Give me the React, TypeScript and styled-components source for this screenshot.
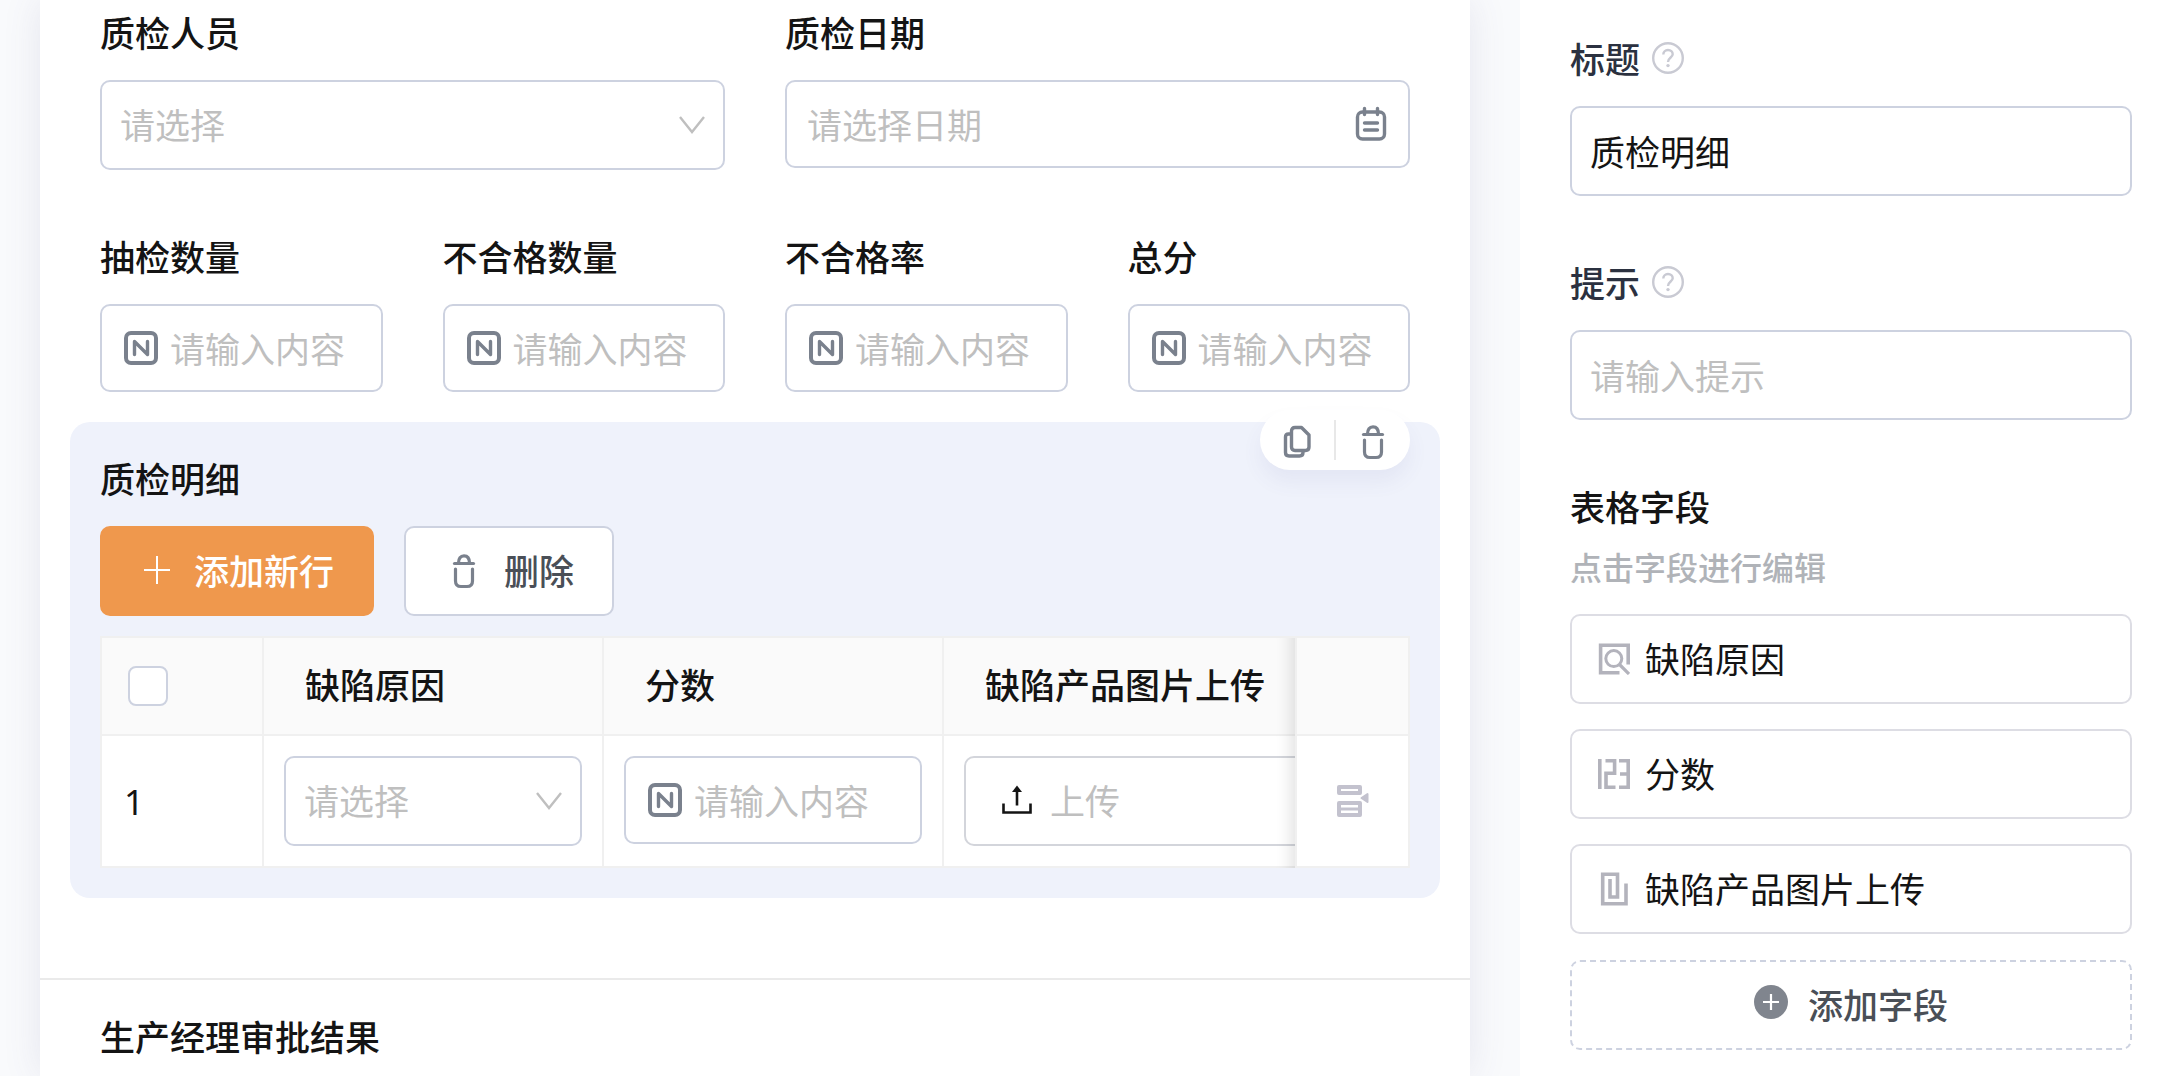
import React, { useId, useState } from "react";
import styled, { createGlobalStyle, css } from "styled-components";

const GlobalStyle = createGlobalStyle`
  *, *::before, *::after { box-sizing: border-box; }
  body {
    margin: 0;
    background: #f9fafc;
    color: #141414;
    font-family: "Noto Sans CJK SC", sans-serif;
    font-size: 35px;
    line-height: 44px;
  }
  button, input, select { font: inherit; color: inherit; margin: 0; }
  svg { display: block; flex: none; }
`;

const Page = styled.div`
  display: grid;
  grid-template-columns: minmax(0, 1fr) 642px;
  min-height: 100vh;
`;

const Canvas = styled.main`
  display: flex;
  padding: 0 50px 0 40px;
`;

const Sheet = styled.div`
  flex: 1;
  min-width: 0;
  background: #fff;
  box-shadow: 0 0 36px rgba(80, 80, 140, 0.12);
`;

const FormBody = styled.div`
  padding: 10px 30px 80px;
`;

const FieldRow = styled.div<{ $columns: number }>`
  display: grid;
  grid-template-columns: repeat(${(p) => p.$columns}, minmax(0, 1fr));
  align-items: start;
  column-gap: 60px;
  padding: 0 30px;
  margin-bottom: 64px;

  & + & { margin-bottom: 30px; }
`;

const FieldBox = styled.div`
  display: flex;
  flex-direction: column;
  gap: 26px;
`;

const LabelLine = styled.div`
  display: flex;
  align-items: center;
  gap: 12px;
`;

const Label = styled.label<{ $tone?: string }>`
  font-weight: 500;
  color: ${(p) => p.$tone ?? "#141414"};
`;

const Heading = styled.h2`
  margin: 0;
  font-size: 35px;
  line-height: 44px;
  font-weight: 500;
`;

const frame = css`
  border: 2px solid #cdd2e0;
  border-radius: 10px;
  background: #fff;
`;

const SelectFrame = styled.div`
  display: grid;
  align-items: center;

  & > * { grid-area: 1 / 1; }
  & > svg {
    justify-self: end;
    margin-right: 20px;
    pointer-events: none;
  }
`;

const NativeSelect = styled.select`
  ${frame}
  appearance: none;
  width: 100%;
  height: 90px;
  padding: 0 60px 2px 18px;
  color: #bfbfbf;
`;

const InputFrame = styled.div<{ $tall?: boolean; $inset?: number }>`
  ${frame}
  display: flex;
  align-items: center;
  gap: 12px;
  height: ${(p) => (p.$tall ? 90 : 88)}px;
  padding: 0 ${(p) => p.$inset ?? 18}px;
`;

const TextInput = styled.input`
  flex: 1;
  min-width: 0;
  height: 48px;
  padding: 0 0 2px;
  border: 0;
  outline: 0;
  background: transparent;
  &::placeholder { color: #bfbfbf; opacity: 1; }
`;

const DetailPanel = styled.section`
  position: relative;
  padding: 34px 30px 30px;
  border-radius: 20px;
  background: #eff2fb;
`;

const PanelTools = styled.div`
  position: absolute;
  top: -12px;
  right: 30px;
  display: flex;
  align-items: center;
  width: 150px;
  height: 60px;
  border-radius: 30px;
  background: #fff;
  box-shadow: 0 12px 20px rgba(88, 88, 160, 0.07);
`;

const ToolButton = styled.button`
  flex: 1;
  display: flex;
  justify-content: center;
  padding: 4px 0 0;
  border: 0;
  background: none;

  & + & { border-left: 2px solid #e8e8e8; }
`;

const ActionBar = styled.div`
  display: flex;
  gap: 30px;
  margin: 26px 0 20px;
`;

const ActionButton = styled.button<{ $primary?: boolean }>`
  display: flex;
  align-items: center;
  gap: 20px;
  height: 90px;
  padding: 0 38px;
  border: 2px solid ${(p) => (p.$primary ? "#ef984d" : "#cdd2e0")};
  border-radius: 10px;
  background: ${(p) => (p.$primary ? "#ef984d" : "#fff")};
  color: ${(p) => (p.$primary ? "#fff" : "#4a4f57")};
  font-weight: 500;
`;

const ButtonText = styled.span`
  padding-bottom: 2px;
`;

const TableScroller = styled.div`
  overflow-x: auto;
  scrollbar-width: none;
  border: solid #f0f0f0;
  border-width: 2px 0 0 2px;
`;

const DataTable = styled.table`
  width: 1500px;
  table-layout: fixed;
  border-collapse: separate;
  border-spacing: 0;
  background: #fff;
`;

const HeadCell = styled.th<{ $width?: number }>`
  width: ${(p) => (p.$width ? `${p.$width}px` : "auto")};
  height: 98px;
  padding: 0 40px 4px 41px;
  border: solid #f0f0f0;
  border-width: 0 2px 2px 0;
  background: #fafafa;
  font-weight: 500;
  text-align: left;
`;

const Cell = styled.td`
  padding: 20px;
  border: solid #f0f0f0;
  border-width: 0 2px 2px 0;
  vertical-align: top;
`;

const pinned = css`
  position: sticky;
  right: 0;
  border-left-width: 2px;

  &::before {
    content: "";
    position: absolute;
    top: 0;
    bottom: -2px;
    right: 100%;
    width: 60px;
    margin-right: 2px;
    box-shadow: inset -20px 0 16px -16px rgba(0, 0, 0, 0.12);
    pointer-events: none;
  }
`;

const PinnedHead = styled(HeadCell)`
  ${pinned}
`;

const PinnedCell = styled(Cell)`
  ${pinned}
  background: #fff;
  vertical-align: middle;
`;

const CheckHead = styled(HeadCell)`
  padding: 0 26px;
`;

const IndexCell = styled(Cell)`
  padding: 2px 22px 0;
  vertical-align: middle;
  font-family: "Noto Sans", "Noto Sans CJK SC", sans-serif;
`;

const Checkbox = styled.input`
  appearance: none;
  display: block;
  width: 40px;
  height: 40px;
  margin: 0;
  border: 2px solid #cdd2e0;
  border-radius: 8px;
  background: #fff;
`;

const UploadButton = styled.button`
  display: flex;
  align-items: center;
  gap: 16px;
  width: 100%;
  height: 90px;
  padding: 0 34px;
  border: 2px solid #d3d5db;
  border-radius: 10px;
  background: #fff;
  color: #bfbfbf;
`;

const RowMenuButton = styled.button`
  display: flex;
  margin: 0 auto;
  padding: 0;
  border: 0;
  background: none;
`;

const NextSection = styled.section`
  padding: 34px 60px 0;
  border-top: 2px solid #eaeaea;
`;

const Settings = styled.aside`
  position: relative;
  display: flex;
  flex-direction: column;
  gap: 64px;
  padding: 36px 30px 26px 50px;
  background: #fff;
`;

const Hint = styled.p`
  margin: 16px 0 26px;
  font-size: 32px;
  line-height: 44px;
  font-weight: 500;
  color: #b0b3b8;
`;

const FieldList = styled.ul`
  display: grid;
  gap: 25px;
  margin: 0 0 26px;
  padding: 0;
  list-style: none;
`;

const FieldItem = styled.button`
  display: flex;
  align-items: center;
  gap: 15px;
  width: 100%;
  height: 90px;
  padding: 0 26px;
  border: 2px solid #dddde4;
  border-radius: 10px;
  background: #fff;
`;

const AddFieldButton = styled.button`
  display: flex;
  align-items: center;
  justify-content: center;
  gap: 20px;
  width: 100%;
  height: 90px;
  border: 2px dashed #cdd2e0;
  border-radius: 10px;
  background: #fff;
  color: #4a4f57;
  font-weight: 500;
`;

const ChevronIcon = () => (
  <svg width="26" height="18" viewBox="0 0 26 18" fill="none" stroke="#bfbfbf" strokeWidth="2.4" aria-hidden="true">
    <path d="M1 1L13 16L25 1" />
  </svg>
);

const NumberIcon = () => (
  <svg width="34" height="34" viewBox="0 0 34 34" fill="none" stroke="#7a818d" strokeLinecap="round" strokeLinejoin="round" aria-hidden="true">
    <rect x="2" y="2" width="30" height="30" rx="5" strokeWidth="4" />
    <path d="M10.500 23.500V10.500L23.500 23.500V10.500" strokeWidth="3.400" />
  </svg>
);

const CalendarIcon = () => (
  <svg width="34" height="36" viewBox="0 0 34 36" fill="none" stroke="#7a818d" strokeWidth="3.4" strokeLinecap="round" aria-hidden="true">
    <rect x="3.500" y="6" width="27" height="27" rx="5" />
    <path d="M10.500 2.500V8.500M23.500 2.500V8.500M10.500 17H23.500M10.500 24H23.500" />
  </svg>
);

const TrashIcon = ({ box = 34 }: { box?: number }) => (
  <svg width={box} height="36" viewBox={`${(34 - box) / 2} 0 ${box} 36`} fill="none" stroke="#7a818d" strokeWidth="3.2" strokeLinecap="round" aria-hidden="true">
    <path d="M7.500 10.500H26.500" />
    <path d="M11.500 10C11.500 5.500 13.500 2.800 17 2.800S22.500 5.500 22.500 10" />
    <path d="M8.500 16V28Q8.500 33.500 14 33.500H20Q25.500 33.500 25.500 28V16" />
  </svg>
);

const CopyIcon = () => (
  <svg width="28" height="34" viewBox="0 0 28 34" fill="none" stroke="#7a818d" strokeWidth="3.4" strokeLinejoin="round" aria-hidden="true">
    <path d="M12 2.500H18.500L26 10V22Q26 25.500 22.500 25.500H12Q8.500 25.500 8.500 22V6Q8.500 2.500 12 2.500Z" />
    <path d="M8.500 9H5.500Q2.500 9 2.500 12V27.500Q2.500 31 6 31H16.500Q20 31 20 27.500V25.500" />
  </svg>
);

const PlusIcon = () => (
  <svg width="34" height="34" viewBox="0 0 34 34" stroke="#fff" strokeWidth="2" aria-hidden="true">
    <path d="M17 2V30M4 16H30" />
  </svg>
);

const UploadIcon = () => (
  <svg width="34" height="34" viewBox="0 0 34 34" fill="none" stroke="#141414" strokeWidth="2.6" aria-hidden="true">
    <path d="M3.500 19.500V28.500H30.500V19.500M17 6V21.500" />
    <path d="M17 1.500L22 8H12Z" fill="#141414" stroke="none" />
  </svg>
);

const RowMenuIcon = () => (
  <svg width="32" height="32" viewBox="0 0 32 32" fill="none" stroke="#c3c2ce" strokeWidth="4" strokeLinejoin="round" aria-hidden="true">
    <rect x="2" y="2" width="21" height="6" />
    <rect x="2" y="18" width="21" height="12" />
    <path d="M2 24H23" strokeWidth="3" />
    <path d="M24.500 13L30.500 9V17Z" fill="#c3c2ce" strokeWidth="2" />
  </svg>
);

const HelpIcon = () => (
  <svg width="32" height="32" viewBox="0 0 32 32" fill="none" stroke="#c9cad3" strokeWidth="2.4" aria-hidden="true">
    <circle cx="16" cy="16" r="14.800" />
    <path d="M11.300 12.600C11.300 9.800 13.300 8 16 8S20.700 9.800 20.700 12.300C20.700 15.400 16 15.700 16 20" />
    <circle cx="16" cy="23.600" r="1.700" fill="#c9cad3" stroke="none" />
  </svg>
);

const LookupIcon = () => (
  <svg width="32" height="32" viewBox="0 0 32 32" fill="none" stroke="#b3b3bc" strokeWidth="3.600" aria-hidden="true">
    <path d="M30.200 21.500V2.200H2.600V29.800H21.500" />
    <circle cx="15.800" cy="15.600" r="8" strokeWidth="3" />
    <path d="M21.500 21.500L31 31" strokeWidth="3.200" />
  </svg>
);

const DigitsIcon = () => (
  <svg width="32" height="32" viewBox="0 0 32 32" fill="none" stroke="#b3b3bc" strokeWidth="3.600" aria-hidden="true">
    <path d="M1.800 1V31" />
    <path d="M7.500 2.800H16.600V15.200H8V29.200H17.500" />
    <path d="M21 2.800H30.200V29.200H21M22 16H30.200" />
  </svg>
);

const AttachmentIcon = () => (
  <svg width="32" height="34" viewBox="0 0 32 34" fill="none" stroke="#b3b3bc" strokeWidth="3.600" aria-hidden="true">
    <path d="M12 7V25H19.500V2.200H4.700V31.700H28V11.500" />
  </svg>
);

const AddCircleIcon = () => (
  <svg width="34" height="42" viewBox="0 0 34 42" aria-hidden="true">
    <circle cx="17" cy="18" r="17" fill="#80858e" />
    <path d="M17 10V26M9 18H25" stroke="#fff" strokeWidth="2.200" />
  </svg>
);

const Dropdown = ({ id, name }: { id?: string; name?: string }) => (
  <SelectFrame>
    <NativeSelect id={id} aria-label={name} defaultValue="">
      <option value="">请选择</option>
    </NativeSelect>
    <ChevronIcon />
  </SelectFrame>
);

const NumberInput = ({ id, name }: { id?: string; name?: string }) => (
  <InputFrame $inset={22}>
    <NumberIcon />
    <TextInput id={id} aria-label={name} inputMode="decimal" placeholder="请输入内容" />
  </InputFrame>
);

const NumberField = ({ label }: { label: string }) => {
  const id = useId();
  return (
    <FieldBox>
      <Label htmlFor={id}>{label}</Label>
      <NumberInput id={id} />
    </FieldBox>
  );
};

const SettingField = ({ label, initial = "", placeholder }: { label: string; initial?: string; placeholder?: string }) => {
  const id = useId();
  const [value, setValue] = useState(initial);
  return (
    <FieldBox>
      <LabelLine>
        <Label htmlFor={id} $tone="#2b3140">{label}</Label>
        <HelpIcon />
      </LabelLine>
      <InputFrame $tall>
        <TextInput id={id} value={value} placeholder={placeholder} onChange={(e) => setValue(e.target.value)} />
      </InputFrame>
    </FieldBox>
  );
};

const numberFields = ["抽检数量", "不合格数量", "不合格率", "总分"];

const tableFields = [
  { name: "缺陷原因", Icon: LookupIcon },
  { name: "分数", Icon: DigitsIcon },
  { name: "缺陷产品图片上传", Icon: AttachmentIcon },
];

export default function App() {
  return (
    <>
      <GlobalStyle />
      <Page>
        <Canvas>
          <Sheet>
            <FormBody>
              <FieldRow $columns={2}>
                <FieldBox>
                  <Label htmlFor="inspector">质检人员</Label>
                  <Dropdown id="inspector" />
                </FieldBox>
                <FieldBox>
                  <Label htmlFor="inspect-date">质检日期</Label>
                  <InputFrame $inset={20}>
                    <TextInput id="inspect-date" placeholder="请选择日期" />
                    <CalendarIcon />
                  </InputFrame>
                </FieldBox>
              </FieldRow>
              <FieldRow $columns={4}>
                {numberFields.map((label) => (
                  <NumberField key={label} label={label} />
                ))}
              </FieldRow>

              <DetailPanel>
                <PanelTools>
                  <ToolButton type="button" aria-label="复制"><CopyIcon /></ToolButton>
                  <ToolButton type="button" aria-label="删除"><TrashIcon /></ToolButton>
                </PanelTools>
                <Heading>质检明细</Heading>
                <ActionBar>
                  <ActionButton type="button" $primary>
                    <PlusIcon />
                    <ButtonText>添加新行</ButtonText>
                  </ActionButton>
                  <ActionButton type="button">
                    <TrashIcon box={40} />
                    <ButtonText>删除</ButtonText>
                  </ActionButton>
                </ActionBar>
                <TableScroller>
                  <DataTable>
                    <thead>
                      <tr>
                        <CheckHead $width={162}><Checkbox type="checkbox" aria-label="全选" /></CheckHead>
                        <HeadCell $width={340}>缺陷原因</HeadCell>
                        <HeadCell $width={340}>分数</HeadCell>
                        <HeadCell>缺陷产品图片上传</HeadCell>
                        <PinnedHead $width={115} aria-label="操作" />
                      </tr>
                    </thead>
                    <tbody>
                      <tr>
                        <IndexCell>1</IndexCell>
                        <Cell><Dropdown name="缺陷原因" /></Cell>
                        <Cell><NumberInput name="分数" /></Cell>
                        <Cell>
                          <UploadButton type="button">
                            <UploadIcon />
                            <ButtonText>上传</ButtonText>
                          </UploadButton>
                        </Cell>
                        <PinnedCell>
                          <RowMenuButton type="button" aria-label="行操作"><RowMenuIcon /></RowMenuButton>
                        </PinnedCell>
                      </tr>
                    </tbody>
                  </DataTable>
                </TableScroller>
              </DetailPanel>
            </FormBody>
            <NextSection>
              <Heading>生产经理审批结果</Heading>
            </NextSection>
          </Sheet>
        </Canvas>

        <Settings>
          <SettingField label="标题" initial="质检明细" />
          <SettingField label="提示" placeholder="请输入提示" />
          <section>
            <Heading>表格字段</Heading>
            <Hint>点击字段进行编辑</Hint>
            <FieldList>
              {tableFields.map(({ name, Icon }) => (
                <li key={name}>
                  <FieldItem type="button">
                    <Icon />
                    <ButtonText>{name}</ButtonText>
                  </FieldItem>
                </li>
              ))}
            </FieldList>
            <AddFieldButton type="button">
              <AddCircleIcon />
              <ButtonText>添加字段</ButtonText>
            </AddFieldButton>
          </section>
        </Settings>
      </Page>
    </>
  );
}
